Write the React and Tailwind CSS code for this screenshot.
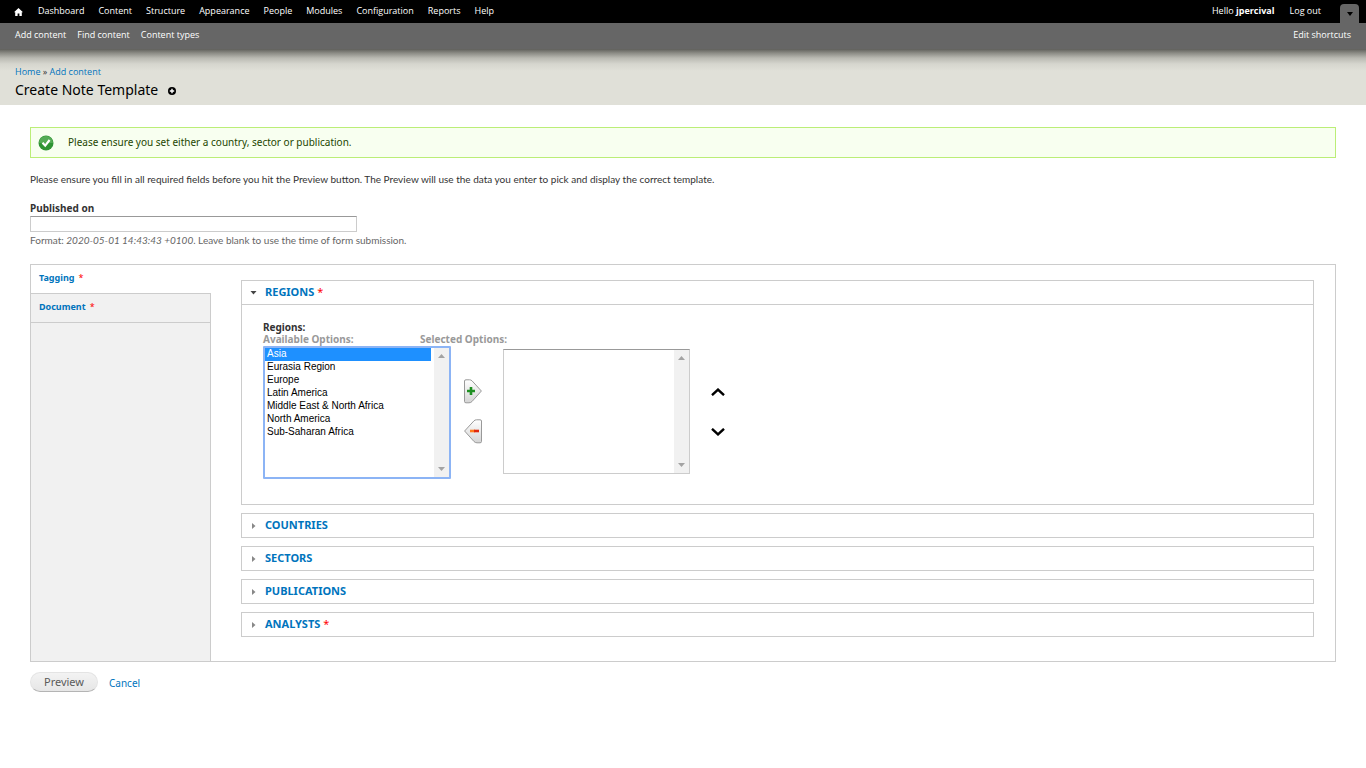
import React, { useState } from 'react';

const MENU = ['Dashboard', 'Content', 'Structure', 'Appearance', 'People', 'Modules', 'Configuration', 'Reports', 'Help'];
const SHORTCUTS = ['Add content', 'Find content', 'Content types'];
const REGIONS = ['Asia', 'Eurasia Region', 'Europe', 'Latin America', 'Middle East & North Africa', 'North America', 'Sub-Saharan Africa'];

function Toolbar() {
  return (
    <nav className="font-['Open_Sans',sans-serif] text-[9px] font-medium text-white">
      <div className="flex h-[23px] items-center bg-black pr-[7px] pl-[14px]">
        <a href="#home" aria-label="Home" className="mr-[15px]">
          <svg width="9" height="8" viewBox="0 0 9 8" fill="white">
            <path d="M4.5 0 9 4.2H7.8V8H5.4V5.4H3.6V8H1.2V4.2H0z" />
          </svg>
        </a>
        <div className="flex flex-1 gap-[14px] pb-px">
          {MENU.map(item => <a key={item} href="#menu">{item}</a>)}
        </div>
        <div className="flex gap-[15px] pb-px">
          <a href="#user">Hello <b>jpercival</b></a>
          <a href="#logout">Log out</a>
        </div>
        <button aria-label="Toggle shortcuts" className="ml-[19px] flex h-[19px] w-[19px] items-center justify-center self-end rounded-t-[4px] bg-[#666]">
          <svg width="6" height="4" viewBox="0 0 6 4"><path d="M0 0h6L3 4z" /></svg>
        </button>
      </div>
      <div className="flex h-[26px] items-center gap-[11px] bg-[#666] px-[15px] pb-[2px]">
        {SHORTCUTS.map(item => <a key={item} href="#shortcut">{item}</a>)}
        <a href="#edit" className="ml-auto">Edit shortcuts</a>
      </div>
    </nav>
  );
}

function Required() {
  return <span className="font-normal text-[#f00]" title="This field is required.">*</span>;
}

function ListBox({ label, options, selected, onChange, focused }) {
  return (
    <div className={focused
      ? 'flex h-[133px] w-[188px] rounded-[1px] border-2 border-[#8cb4f5]'
      : 'flex h-[125px] w-[187px] border border-[#ccc] border-t-[#999]'}>
      <select
        multiple
        aria-label={label}
        value={selected}
        onChange={onChange}
        className="min-w-0 flex-1 appearance-none overflow-hidden bg-white font-['Liberation_Sans',sans-serif] text-[10px] leading-[13px] text-black outline-none"
      >
        {options.map(option => (
          <option key={option} value={option} className="h-[13px] min-h-0 px-[2px] py-0 checked:bg-[#1e90ff] checked:bg-[linear-gradient(#1e90ff,#1e90ff)] checked:text-white">
            {option}
          </option>
        ))}
      </select>
      <div className="ml-[3px] flex w-[15px] flex-col items-center justify-between bg-[#f1f1f1] py-[6px]">
        <svg width="7" height="4" viewBox="0 0 7 4" fill="#a3a3a3"><path d="M3.5 0 7 4H0z" /></svg>
        <svg width="7" height="4" viewBox="0 0 7 4" fill="#a3a3a3"><path d="M0 0h7L3.500 4z" /></svg>
      </div>
    </div>
  );
}

function Fieldset({ title, required, open, onToggle, children }) {
  return (
    <section className="border border-[#ccc]">
      <button
        type="button"
        aria-expanded={open}
        onClick={onToggle}
        className="flex h-[23px] w-full items-center pl-2 text-[11px] font-bold text-[#0074bd] uppercase"
      >
        <span className="flex w-[15px] items-center">
          {open
            ? <svg width="7" height="4" viewBox="0 0 7 4" fill="#444"><path d="M.5 0h6L3.500 3.500z" /></svg>
            : <svg width="7" height="6" viewBox="0 0 7 6" fill="#888"><path d="M2 0v6l3.500-3z" /></svg>}
        </span>
        <span>{title} {required && <Required />}</span>
      </button>
      {open && children}
    </section>
  );
}

function RegionPicker() {
  const [selected, setSelected] = useState(['Asia']);
  return (
    <div className="h-[200px] border-t border-[#ccc] pt-4 pl-[21px]">
      <div className="text-[10px] leading-3 font-bold text-[#333]">Regions:</div>
      <div className="flex pb-px text-[10px] leading-3 font-bold text-[#999]">
        <span className="w-[157px]">Available Options:</span>
        <span>Selected Options:</span>
      </div>
      <div className="flex">
        <ListBox
          label="Available Options"
          options={REGIONS}
          selected={selected}
          onChange={e => setSelected(Array.from(e.target.selectedOptions, o => o.value))}
          focused
        />
        <div className="ml-[13px] flex flex-col justify-center gap-[15px] pb-[2px]">
          <button type="button" aria-label="Add">
            <svg width="18" height="25" viewBox="0 0 18 25">
              <defs>
                <linearGradient id="face" x1="0" y1="0" x2="0" y2="1">
                  <stop offset="0" stopColor="#fff" />
                  <stop offset="1" stopColor="#d4d4d4" />
                </linearGradient>
              </defs>
              <path d="M2 .8H5.500Q7 .8 8 1.800L17.400 12 8 22.500Q6.800 23.800 5 23.800H2Q.5 23.800.5 22.500V2Q.5.8 2 .8z" fill="url(#face)" stroke="#999" />
              <path d="M3 12h8M7 8v8" stroke="#1f8f22" strokeWidth="2.600" />
            </svg>
          </button>
          <button type="button" aria-label="Remove">
            <svg width="18" height="25" viewBox="0 0 18 25">
              <path d="M16 .8H12.500Q11 .8 10 1.800L.6 12 10 22.500Q11.200 23.800 13 23.800H16Q17.500 23.800 17.500 22.500V2Q17.500.8 16 .8z" fill="url(#face)" stroke="#999" />
              <path d="M6 12h5" stroke="#ff7a1a" strokeWidth="2.600" />
              <path d="M10 12h5" stroke="#e0260c" strokeWidth="2.600" />
            </svg>
          </button>
        </div>
        <div className="ml-[21px] pt-[3px]">
          <ListBox label="Selected Options" options={[]} selected={[]} onChange={() => {}} />
        </div>
        <div className="ml-[21px] flex flex-col justify-center gap-8 pb-px text-black">
          <button type="button" aria-label="Move up">
            <svg width="14" height="8" viewBox="0 0 14 8" fill="none" stroke="currentColor" strokeWidth="2.400"><path d="M1 7.200 7 1.600l6 5.600" /></svg>
          </button>
          <button type="button" aria-label="Move down">
            <svg width="14" height="8" viewBox="0 0 14 8" fill="none" stroke="currentColor" strokeWidth="2.400"><path d="M1 .8 7 6.400l6-5.600" /></svg>
          </button>
        </div>
      </div>
    </div>
  );
}

export default function App() {
  const [open, setOpen] = useState({ Regions: true });
  const toggle = name => setOpen(prev => ({ ...prev, [name]: !prev[name] }));

  return (
    <div className="min-h-screen bg-white font-['Noto_Sans',sans-serif] text-[#333]">
      <Toolbar />
      <header className="h-14 bg-[#e0e0d8] bg-[linear-gradient(#5f5f5b,#8b8b85_4px,#b9b9b2_9px,#d6d6ce_15px,#e0e0d8_22px)] px-[15px] pt-4">
        <div className="font-['Open_Sans',sans-serif] text-[9px] leading-[14px]">
          <a href="#home" className="text-[#0074bd]">Home</a> » <a href="#add" className="text-[#0074bd]">Add content</a>
        </div>
        <h1 className="mt-[2px] flex items-center text-[14px] leading-[18px] text-black">
          Create Note Template
          <button type="button" aria-label="Add to shortcuts" className="ml-[10px] pt-[2px]">
            <svg width="8" height="8" viewBox="0 0 8 8">
              <circle cx="4" cy="4" r="4" />
              <path d="M1.800 4h4.400M4 1.800v4.400" stroke="white" strokeWidth="1.400" />
            </svg>
          </button>
        </h1>
      </header>

      <main className="px-[30px] pt-[22px]">
        <div role="status" className="flex h-[31px] items-center border border-[#be7] bg-[#f8fff0] pl-[7px] text-[10px] text-[#234600]">
          <svg width="16" height="16" viewBox="0 0 16 16" className="mr-[14px]">
            <circle cx="8" cy="8" r="7.500" fill="#2f9434" />
            <path d="M1 8a7 7 0 0 1 14 0z" fill="#54ab55" />
            <path d="M4.500 7.800 7.200 10.600 11.600 5" fill="none" stroke="white" strokeWidth="2.200" />
          </svg>
          Please ensure you set either a country, sector or publication.
        </div>

        <form onSubmit={e => e.preventDefault()}>
          <p className="mt-[14px] font-['Lato',sans-serif] text-[10px] leading-[14px]">
            Please ensure you fill in all required fields before you hit the Preview button. The Preview will use the data you enter to pick and display the correct template.
          </p>

          <label htmlFor="published" className="mt-[15px] block pb-px text-[10px] leading-[14px] font-bold">Published on</label>
          <input id="published" type="text" className="block h-4 w-[327px] border border-[#ccc] border-t-[#999] bg-white px-1 text-[10px] outline-none" />
          <p className="mt-px font-['Lato',sans-serif] text-[10px] leading-[14px] text-[#666]">
            Format: <em>2020-05-01 14:43:43 +0100</em>. Leave blank to use the time of form submission.
          </p>

          <div className="mt-[17px] flex border border-[#ccc]">
            <div className="flex w-[180px] flex-col bg-[#f1f1f1] text-[9px] font-bold text-[#0074bd]">
              <a href="#tagging" className="flex h-7 items-center gap-1 bg-white pb-[2px] pl-2">Tagging <Required /></a>
              <a href="#document" className="flex h-[30px] items-center gap-1 border-y border-r border-[#ccc] pb-[2px] pl-2">Document <Required /></a>
              <div className="flex-1 border-r border-[#ccc]" />
            </div>
            <div className="flex flex-1 flex-col gap-2 pt-[15px] pr-[21px] pb-6 pl-[30px]">
              <Fieldset title="Regions" required open={!!open.Regions} onToggle={() => toggle('Regions')}>
                <RegionPicker />
              </Fieldset>
              <Fieldset title="Countries" open={!!open.Countries} onToggle={() => toggle('Countries')} />
              <Fieldset title="Sectors" open={!!open.Sectors} onToggle={() => toggle('Sectors')} />
              <Fieldset title="Publications" open={!!open.Publications} onToggle={() => toggle('Publications')} />
              <Fieldset title="Analysts" required open={!!open.Analysts} onToggle={() => toggle('Analysts')} />
            </div>
          </div>

          <div className="mt-[10px] flex items-center gap-[11px]">
            <button type="submit" className="h-5 w-[68px] rounded-full border border-[#e4e4e4] border-b-[#b4b4b4] bg-[linear-gradient(#f3f3f3,#e6e6e6)] text-[11px] leading-[16px] text-[#5a5a5a]">
              Preview
            </button>
            <a href="#cancel" className="pt-[2px] text-[10px] text-[#0074bd]">Cancel</a>
          </div>
        </form>
      </main>
    </div>
  );
}
